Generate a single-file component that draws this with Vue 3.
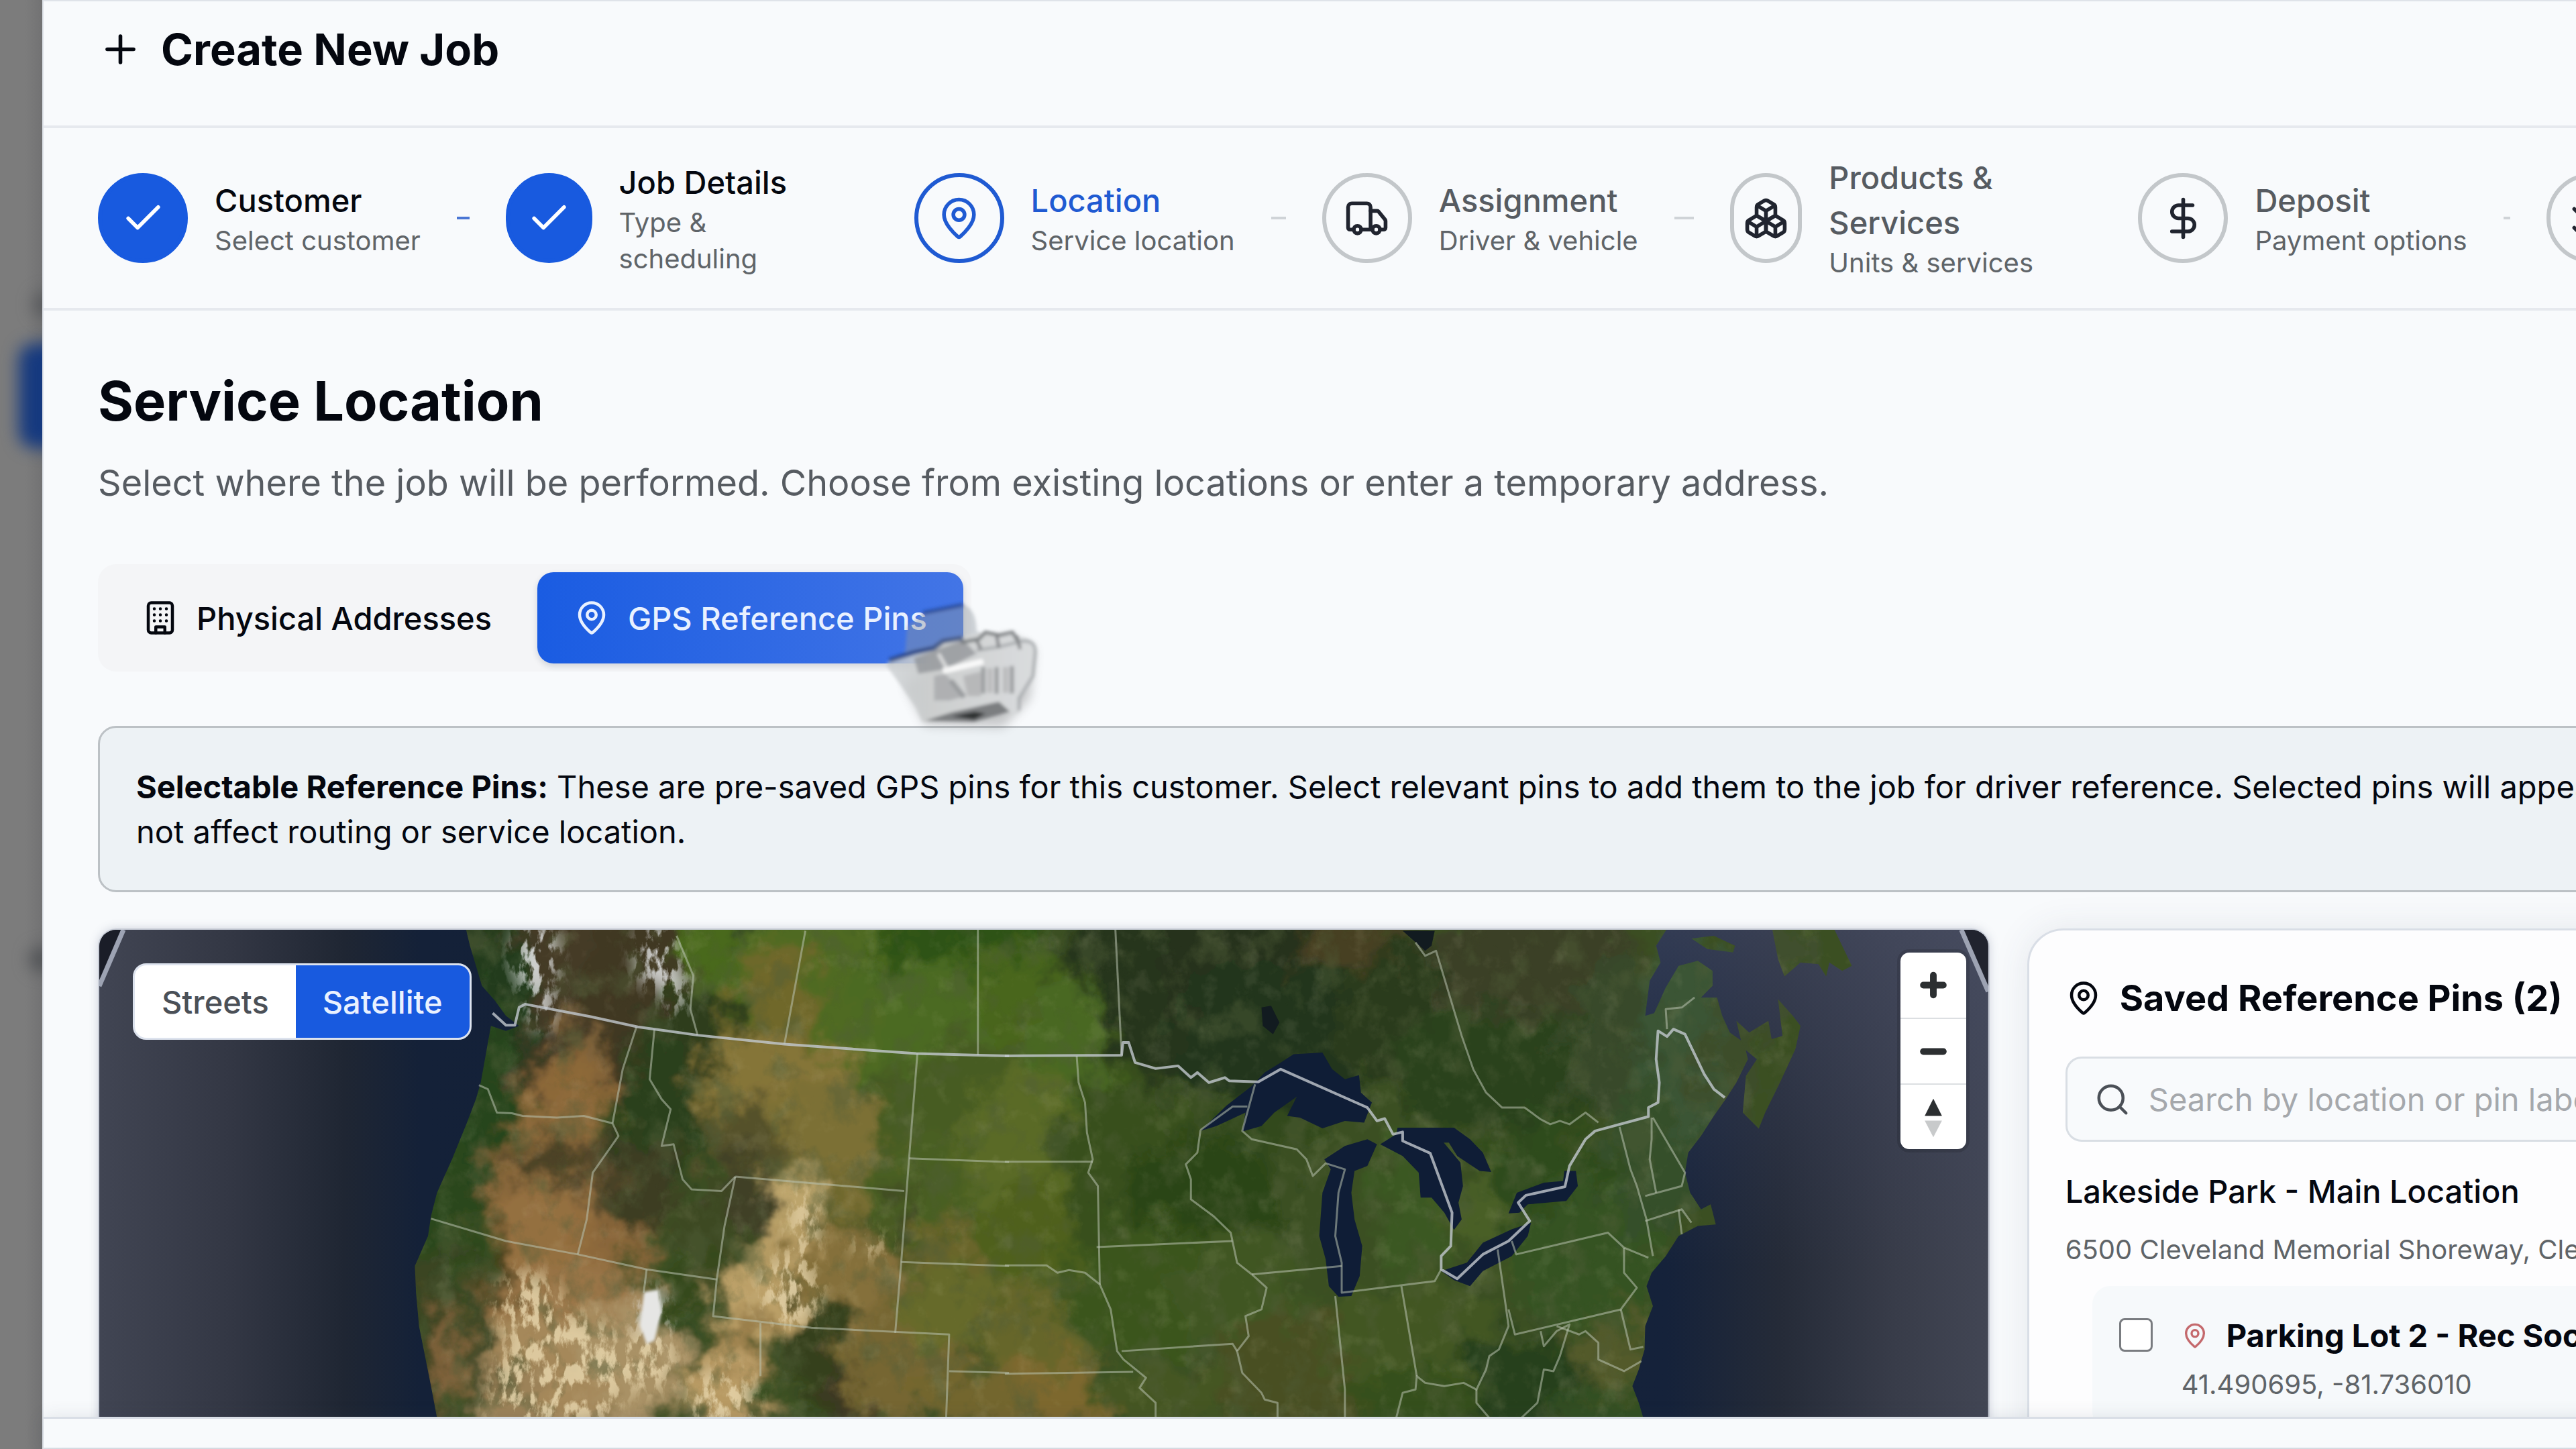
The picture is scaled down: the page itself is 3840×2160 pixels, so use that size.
<script setup>
import { ref } from 'vue'

const icons = {
  plus: '<path d="M5 12h14"/><path d="M12 5v14"/>',
  check: '<path d="M20 6 9 17l-5-5"/>',
  pin: '<path d="M20 10c0 4.993-5.539 10.193-7.399 11.799a1 1 0 0 1-1.202 0C9.539 20.193 4 14.993 4 10a8 8 0 0 1 16 0"/><circle cx="12" cy="10" r="3"/>',
  truck: '<path d="M14 18V6a2 2 0 0 0-2-2H4a2 2 0 0 0-2 2v11a1 1 0 0 0 1 1h2"/><path d="M15 18H9"/><path d="M19 18h2a1 1 0 0 0 1-1v-3.65a1 1 0 0 0-.22-.624l-3.48-4.35A1 1 0 0 0 17.52 8H14"/><circle cx="17" cy="18" r="2"/><circle cx="7" cy="18" r="2"/>',
  boxes: '<path d="M2.97 12.92A2 2 0 0 0 2 14.63v3.24a2 2 0 0 0 .97 1.71l3 1.8a2 2 0 0 0 2.06 0L12 19v-5.5l-5-3-4.03 2.42Z"/><path d="m7 16.5-4.74-2.85"/><path d="m7 16.5 5-3"/><path d="M7 16.5v5.17"/><path d="M12 13.5V19l3.97 2.38a2 2 0 0 0 2.06 0l3-1.8a2 2 0 0 0 .97-1.71v-3.24a2 2 0 0 0-.97-1.71L17 10.5l-5 3Z"/><path d="m17 16.5-5-3"/><path d="m17 16.5 4.74-2.85"/><path d="M17 16.5v5.17"/><path d="M7.97 4.42A2 2 0 0 0 7 6.13v4.37l5 3 5-3V6.13a2 2 0 0 0-.97-1.71l-3-1.8a2 2 0 0 0-2.06 0l-3 1.8Z"/><path d="M12 8 7.26 5.15"/><path d="m12 8 4.74-2.85"/><path d="M12 13.5V8"/>',
  dollar: '<path d="M12 2v20"/><path d="M17 5H9.5a3.5 3.5 0 0 0 0 7h5a3.5 3.5 0 0 1 0 7H6"/>',
  list: '<path d="M13 5h8"/><path d="M13 12h8"/><path d="M13 19h8"/><path d="m3 17 2 2 4-4"/><path d="m3 7 2 2 4-4"/>',
  building: '<rect width="16" height="20" x="4" y="2" rx="2"/><path d="M9 22v-4h6v4"/><path d="M8 6h.01M16 6h.01M12 6h.01M12 10h.01M12 14h.01M16 10h.01M16 14h.01M8 10h.01M8 14h.01"/>',
  search: '<path d="m21 21-4.34-4.34"/><circle cx="11" cy="11" r="8"/>'
}

const steps = [
  { title: 'Customer', note: 'Select customer', icon: 'check', state: 'done' },
  { title: 'Job Details', note: 'Type & scheduling', icon: 'check', state: 'done' },
  { title: 'Location', note: 'Service location', icon: 'pin', state: 'current' },
  { title: 'Assignment', note: 'Driver & vehicle', icon: 'truck', state: 'todo' },
  { title: 'Products & Services', note: 'Units & services', icon: 'boxes', state: 'todo' },
  { title: 'Deposit', note: 'Payment options', icon: 'dollar', state: 'todo' },
  { title: '', note: '', icon: 'list', state: 'todo' }
]

const search = ref('')
const picked = ref(false)

// Land tones: [cx, cy, rx, ry, colour]
const tones = [
  [700, 60, 300, 190, '#2f4122'], [690, 110, 120, 170, '#453a26'], [810, 60, 90, 170, '#3f3820'],
  [590, 120, 60, 130, '#243a1e'], [560, 260, 70, 160, '#28441f'], [500, 430, 50, 180, '#29471f'], [500, 620, 40, 160, '#3a4420'],
  [1120, 90, 220, 130, '#506b22'], [1010, 130, 60, 110, '#6f672c'], [1290, 60, 130, 140, '#2d5219'], [1380, 140, 130, 110, '#48661f'], [1230, 130, 90, 90, '#4c6a22'],
  [910, 60, 40, 130, '#48691f'],
  [880, 190, 80, 110, '#2f3d1e'], [830, 290, 60, 110, '#2a411b'],
  [710, 230, 56, 60, '#8c6739'], [725, 170, 22, 50, '#80633a'], [680, 290, 60, 60, '#8e6a3a'], [640, 390, 66, 80, '#8a673a'], [680, 470, 100, 90, '#94703f'], [770, 460, 60, 40, '#8c683a'],
  [670, 345, 60, 30, '#4b4326'], [800, 380, 60, 70, '#3e3c22'], [740, 360, 30, 60, '#54472a'],
  [1010, 240, 120, 80, '#857437'], [1080, 330, 120, 100, '#7b7035'], [960, 330, 60, 80, '#55512a'], [1040, 410, 80, 50, '#6a652c'],
  [1310, 270, 150, 110, '#475c22'], [1290, 400, 140, 110, '#4a5e22'], [1400, 330, 120, 120, '#5a6a28'], [1400, 470, 90, 100, '#50611f'],
  [960, 400, 60, 60, '#3f3f27'], [900, 460, 50, 60, '#3c4a20'], [1045, 410, 34, 70, '#bda56c'], [1040, 520, 76, 90, '#b49a62'], [970, 560, 60, 60, '#bca068'], [1110, 520, 80, 80, '#85703a'],
  [1205, 440, 20, 56, '#3f4a22'], [1260, 480, 60, 40, '#6a652c'],
  [700, 560, 130, 70, '#997547'], [680, 660, 140, 90, '#a5885a'], [800, 640, 70, 100, '#a99165'], [610, 690, 50, 60, '#9c8258'],
  [880, 560, 28, 90, '#35491f'], [905, 630, 22, 60, '#364d21'], [520, 640, 20, 90, '#80623a'], [565, 620, 20, 110, '#3d4726'], [600, 500, 18, 60, '#44401f'],
  [960, 620, 46, 40, '#9a7f4c'], [930, 690, 56, 60, '#b89a63'], [1080, 640, 50, 90, '#36401f'], [1120, 690, 40, 60, '#3c3820'], [1200, 650, 90, 80, '#766631'], [1260, 560, 70, 60, '#666a2c'],
  [1400, 610, 90, 80, '#66662a'], [1400, 700, 110, 60, '#7d672f'], [1300, 700, 80, 50, '#73662f'],
  [1560, 90, 130, 150, '#25351a'], [1720, 60, 150, 120, '#27331a'], [1880, 50, 90, 80, '#463f22'], [1760, 160, 160, 110, '#22341a'], [1980, 140, 140, 120, '#2b3a1f'], [2150, 80, 160, 140, '#3a3f28'], [2080, 210, 160, 90, '#2b421d'], [2260, 160, 70, 120, '#38482a'],
  [1520, 350, 90, 150, '#37501a'], [1440, 160, 60, 90, '#4a6822'], [1640, 400, 120, 90, '#2b4518'], [1740, 300, 80, 40, '#33491b'],
  [1560, 540, 130, 100, '#3b551d'], [1700, 540, 100, 90, '#405720'], [1780, 660, 120, 90, '#495023'], [1960, 400, 60, 110, '#3b5820'], [2080, 430, 70, 60, '#485f26'], [1960, 600, 130, 80, '#425720'],
  [2160, 380, 90, 100, '#2f4b1e'], [2220, 500, 110, 110, '#355221'], [2380, 200, 90, 160, '#375230'], [2320, 340, 70, 120, '#34502b'], [2130, 680, 110, 80, '#26401a'], [2260, 640, 60, 70, '#525a2c'], [1580, 700, 100, 50, '#455720'], [1970, 710, 100, 50, '#36501e'], [2250, 720, 80, 40, '#335022'],
  [2370, 160, 60, 160, '#3a5434'], [2490, 60, 60, 80, '#40502f'], [2440, 220, 50, 120, '#3c4d2b']
]

const snow = [
  [650, 40, 34, 60], [660, 110, 20, 40], [830, 40, 30, 50], [860, 90, 16, 40],
  [824, 580, 22, 46], [640, 560, 50, 50], [690, 660, 100, 90], [820, 640, 40, 50],
  [640, 700, 60, 60], [930, 700, 50, 50], [1050, 440, 22, 56], [1030, 540, 46, 56], [1150, 470, 30, 14]
]

const westLines = [
  'M645 478L660 490 675 560 700 562 718 570 775 575 820 570 868 592',
  'M908 303L885 430 868 592 878 630 835 740 825 880 810 985',
  'M565 878L690 945 810 985 925 1030 1042 1060', 'M925 1030L920 1100',
  'M1073 752L1055 900 1042 1060 1036 1170 1200 1205 1430 1225 1425 1475',
  'M1073 752L1355 795', 'M1377 383L1363 700 1350 1008 1340 1220',
  'M938 310L930 460 950 520 965 550 950 660 970 655 985 760 1000 790 1050 795 1073 752',
  'M1363 697L1530 708', 'M1350 1008L1530 1020', 'M1430 1335L1530 1340', 'M1115 1190V1350',
  'M1190 15L1155 355', 'M1478 0V388', 'M975 30L1003 150 998 250 1010 328'
]
const eastLines = [
  'M0 707H137', 'M0 1018H65L82 1040 100 1032 125 1040 148 1075 165 1150 175 1275 185 1300 220 1355 210 1385 235 1430V1475',
  'M0 1343L200 1337', 'M112 390L115 470 125 530 128 620 137 700 130 740 145 780 148 1075', 'M172 0L182 388',
  'M143 963L355 945', 'M182 1275L355 1253 362 1275',
  'M305 612L300 680 282 715 290 760 290 820 325 870 352 920 362 1010 385 1045 408 1085 400 1150 375 1170 380 1230 362 1275 370 1340 400 1400 405 1420 425 1430V1475',
  'M385 1045L525 1020', 'M305 612L355 542H378', 'M390 475L370 615 385 640 455 670 470 700 480 750 500 712 530 730 520 800 515 930 525 1010V1100L670 1065 680 1030',
  'M515 1110L530 1390V1475', 'M618 1080L642 1350', 'M610 1475L620 1400 640 1390 642 1350 655 1370 685 1380 715 1370 735 1390 750 1330 755 1290 770 1270 785 1200 780 1130 768 970',
  'M790 945L797 985 940 920 965 965 1003 995', 'M785 1150L795 1225 960 1150 985 1085 965 1040V965',
  'M640 50L655 90 672 75 712 330 730 430 750 500 775 545H810L835 580 850 595 865 585 880 595 905 560 925 590',
  'M958 603L975 730 985 780 1000 880 1010 990', 'M1008 575V640L1005 700 1015 800', 'M1010 575L1060 740 1055 780 998 810',
  'M998 885L1055 850 1070 890', 'M1050 850L1055 925', 'M960 1150L975 1270 995 1262',
  'M860 1200L895 1225 905 1215 925 1250V1300L965 1335 992 1305', 'M835 1215L840 1260 860 1215 880 1195 865 1290 855 1335 840 1330 830 1430 805 1475',
  'M735 1390V1430L755 1475', 'M1032 310L1030 250 1055 245 1075 215'
]
</script>

<template>
  <div class="page">
    <div class="backdrop" aria-hidden="true">
      <i class="smudge one"></i><i class="smudge active"></i><i class="smudge two"></i>
    </div>

    <section class="dialog" role="dialog" aria-labelledby="dialog-title">
      <header class="head">
        <svg class="icon lg" viewBox="0 0 24 24" v-html="icons.plus"></svg>
        <h1 id="dialog-title">Create New Job</h1>
      </header>

      <ol class="stepper">
        <li v-for="(s, i) in steps" :key="i" class="step" :class="s.state">
          <span class="dot"><svg class="icon lg" viewBox="0 0 24 24" v-html="icons[s.icon]"></svg></span>
          <span class="label">
            <span class="name">{{ s.title }}</span>
            <span class="note">{{ s.note }}</span>
          </span>
          <span class="link"></span>
        </li>
      </ol>

      <main class="body">
        <h2>Service Location</h2>
        <p class="lead">Select where the job will be performed. Choose from existing locations or enter a temporary address.</p>

        <div class="tabs" role="tablist">
          <button type="button" role="tab" class="tab">
            <svg class="icon md" viewBox="0 0 24 24" v-html="icons.building"></svg>Physical Addresses
          </button>
          <button type="button" role="tab" class="tab on" aria-selected="true">
            <svg class="icon md" viewBox="0 0 24 24" v-html="icons.pin"></svg>GPS Reference Pins
          </button>
          <svg class="cursor" viewBox="0 0 900 840" aria-hidden="true">
            <defs>
              <filter id="soft" x="-20%" y="-20%" width="140%" height="140%"><feGaussianBlur stdDeviation="8" /></filter>
              <filter id="softer" x="-30%" y="-30%" width="160%" height="160%"><feGaussianBlur stdDeviation="24" /></filter>
              <linearGradient id="palm" x1="0" y1="0" x2="1" y2="0">
                <stop offset="0" stop-color="#c6cacd" stop-opacity=".7" /><stop offset=".3" stop-color="#cccece" /><stop offset="1" stop-color="#dadcde" />
              </linearGradient>
            </defs>
            <path d="M180 540L270 720 620 730 740 600 760 380 640 320Z" fill="#555" opacity=".3" filter="url(#softer)" />
            <g filter="url(#soft)">
              <path d="M190 280L270 215 440 180Q500 200 500 300L560 320 300 390 180 400Z" fill="#8e959f" opacity=".42" />
              <path d="M260 218L440 182" stroke="#1c3f8c" stroke-width="20" opacity=".65" />
              <path d="M95 450L120 425 300 385 340 345 560 300 690 325Q770 330 768 400L755 500Q740 560 690 600V665L480 680 260 705 230 640Z" fill="url(#palm)" />
              <path d="M220 420L440 340 500 400 360 470 240 490Z" fill="#85888e" opacity=".65" />
              <path d="M110 430L220 395 310 375 350 345 440 330" stroke="#1a3368" stroke-width="22" fill="none" opacity=".65" />
              <path d="M430 350L510 335 540 305 600 318 660 305 690 350" stroke="#707376" stroke-width="16" fill="none" opacity=".85" />
              <path d="M500 385L600 370 700 345Q768 335 762 400L752 500 690 600V655" stroke="#999c9f" stroke-width="14" fill="none" opacity=".7" />
              <path d="M500 340L520 380M590 320L600 375M680 320L695 380" stroke="#828487" stroke-width="14" />
              <path d="M310 500L360 490 450 590 380 610 310 610Z" fill="#afb0b2" />
              <path d="M440 500L520 480V590H460Z" fill="#b7b8b9" />
              <path d="M530 460V578M590 460V580M658 455V578" stroke="#9a9c9e" stroke-width="18" />
              <path d="M560 465V575M630 460V575" stroke="#bbbcbd" stroke-width="24" />
              <path d="M350 478L530 435" stroke="#fff" stroke-width="26" opacity=".9" />
              <path d="M330 400L375 480" stroke="#f4f4f4" stroke-width="16" opacity=".7" />
              <path d="M385 520L445 595" stroke="#9a9c9f" stroke-width="22" />
              <path d="M270 700L390 662 600 615 650 660 490 705Z" fill="#7c7e80" />
              <path d="M390 680L490 660 540 668 490 695Z" fill="#2e3032" />
            </g>
          </svg>
        </div>

        <p class="notice"><strong>Selectable Reference Pins:</strong> These are pre-saved GPS pins for this customer. Select relevant pins to add them to the job for driver reference. Selected pins will appear<br />not affect routing or service location.</p>

        <div class="columns">
          <div class="map">
            <svg class="terrain" viewBox="0 0 2816 1000" role="img" aria-label="Satellite map">
              <defs>
                <linearGradient id="sea" x1="0" x2="1" y1="0" y2="0">
                  <stop offset="0" stop-color="#414553" /><stop offset=".07" stop-color="#333744" /><stop offset=".13" stop-color="#1f2633" /><stop offset=".17" stop-color="#142138" />
                  <stop offset=".5" stop-color="#12203a" /><stop offset=".83" stop-color="#15223a" /><stop offset=".89" stop-color="#252b38" /><stop offset=".95" stop-color="#383c49" /><stop offset="1" stop-color="#424654" />
                </linearGradient>
                <linearGradient id="haze" x1="0" x2="0" y1="0" y2="1">
                  <stop offset="0" stop-color="#4a5068" stop-opacity=".55" /><stop offset=".5" stop-color="#3a4260" stop-opacity="0" />
                </linearGradient>
                <clipPath id="land">
                  <path transform="matrix(.893 0 0 .4974 -10 -6)" d="M622 0L630 60 640 120 650 180 672 225 690 270 712 300 690 315 665 300 660 350 655 400 648 470 640 520 625 590 600 700 575 800 565 870 560 930 538 1020 540 1100 545 1200 555 1290 565 1380 575 1475 640 2030H1530V0Z" />
                  <path transform="matrix(.9566 0 0 .4974 1350 -6)" d="M-10 0H1035L1015 60 1022 110 1005 165 998 270 1012 262 1030 185 1050 120 1080 105 1103 135V180L1085 215 1110 215 1118 270 1130 320 1152 350 1158 400 1140 470 1125 515 1105 570 1085 630 1065 680 1060 740 1068 800 1085 850 1100 835 1108 895 1080 900 1050 930 1030 990 1008 1040 1000 1080 1010 1140 998 1200 997 1270 988 1330 978 1380 988 1430 995 1475 900 2030H-10Z" />
                  <path transform="matrix(.9566 0 0 .4974 1350 -6)" d="M1205 220L1228 270 1240 300 1232 370 1208 470 1185 560 1175 608 1150 560 1155 450 1172 400 1150 365 1140 285 1160 320 1190 285 1195 340 1212 330ZM1195 0H1290L1320 120 1305 135 1285 110 1280 152 1268 115 1240 110 1215 152 1205 100ZM1070 38L1105 30 1138 60 1135 80 1095 70Z" />
                </clipPath>
                <filter id="smear" x="0" y="0" width="100%" height="100%">
                  <feGaussianBlur stdDeviation="13" result="b" />
                  <feTurbulence type="fractalNoise" baseFrequency=".02" numOctaves="6" seed="8" />
                  <feDisplacementMap in="b" scale="110" xChannelSelector="R" yChannelSelector="G" result="d" />
                  <feGaussianBlur in="d" stdDeviation="1" />
                </filter>
                <filter id="grain" x="0" y="0" width="100%" height="100%">
                  <feTurbulence type="fractalNoise" baseFrequency=".022 .018" numOctaves="7" seed="21" />
                  <feColorMatrix values="0 0 0 0 .08  0 0 0 0 .11  0 0 0 0 .04  4 0 0 0 -2" />
                </filter>
                <filter id="glow" x="0" y="0" width="100%" height="100%">
                  <feTurbulence type="fractalNoise" baseFrequency=".03" numOctaves="5" seed="33" />
                  <feColorMatrix values="0 0 0 0 .8  0 0 0 0 .75  0 0 0 0 .5  4 0 0 0 -2.2" />
                </filter>
                <filter id="flecks" x="0" y="0" width="100%" height="100%">
                  <feGaussianBlur in="SourceGraphic" stdDeviation="15" result="s" />
                  <feTurbulence type="fractalNoise" baseFrequency=".07 .034" numOctaves="5" seed="5" />
                  <feColorMatrix values="0 0 0 0 1  0 0 0 0 1  0 0 0 0 1  6 0 0 0 -2.8" result="n" />
                  <feComposite in="s" in2="n" operator="in" />
                </filter>
                <filter id="edge"><feGaussianBlur stdDeviation="2" /></filter>
              </defs>
              <rect width="2816" height="1000" fill="url(#sea)" />
              <rect x="2200" width="616" height="1000" fill="url(#haze)" />
              <g clip-path="url(#land)">
                <g filter="url(#smear)">
                  <rect x="-100" y="-100" width="3016" height="1200" fill="#3b4f20" />
                  <ellipse v-for="(t, i) in tones" :key="i" :cx="t[0]" :cy="t[1]" :rx="t[2]" :ry="t[3]" :fill="t[4]" />
                </g>
                <rect width="2816" height="1000" filter="url(#grain)" opacity=".45" />
                <rect width="2816" height="1000" filter="url(#glow)" opacity=".08" />
                <g filter="url(#flecks)" opacity=".85">
                  <rect width="2816" height="1000" fill="none" />
                  <ellipse v-for="(t, i) in snow" :key="i" :cx="t[0]" :cy="t[1]" :rx="t[2]" :ry="t[3]" :fill="i < 5 ? '#e8eaec' : '#e6d4aa'" />
                </g>
                <path d="M812 540L834 536 838 570 828 612 816 618 806 590Z" fill="#e6e6e4" filter="url(#edge)" />
              </g>
              <g transform="matrix(.9566 0 0 .4974 1350 -6)" fill="#0f1d36">
                <path d="M305 615L345 540 385 480 405 440 430 410 450 385 495 380 510 430 530 460 552 448 555 500 572 530 560 590 530 585 495 607 460 575 440 570 455 512 420 560 400 600 370 617 375 560 330 600Z" />
                <path d="M520 1112L505 1080 500 1000 490 930 495 800 508 730 498 700 530 660 565 640 580 655 565 720 545 735 540 800 545 880 557 960 553 1050 540 1110Z" />
                <path d="M585 655L610 625 612 605 700 605 725 640 745 680 758 738 740 735 705 690 692 650 684 650 710 710 714 780 707 830 712 880 700 912 685 860 665 815 648 815 645 740 620 690Z" />
                <path d="M680 1035L700 1062 725 1080 745 1035 790 990 815 930 820 890 790 910 745 950 720 1010Z" />
                <path d="M785 862L798 800 840 770 870 765 872 735 890 735 893 780 875 825 815 835 802 860Z" />
                <path d="M400 245L415 240 428 290 418 325 402 300ZM620 15L670 15 665 60 655 75Z" fill="#121b20" />
              </g>
              <g class="borders">
                <g transform="matrix(.893 0 0 .4974 -10 -6)">
                  <path v-for="d in westLines" :key="d" :d="d" />
                  <path class="nation" d="M668 262L690 298 705 298 712 245 722 235 830 272 910 303 1010 328 1155 355 1375 383 1480 388 1530 390" />
                </g>
                <g transform="matrix(.9566 0 0 .4974 1350 -6)">
                  <path v-for="d in eastLines" :key="d" :d="d" />
                  <path class="nation" d="M0 390L182 388 184 350 193 350 203 410 235 428 270 420 290 455 300 440 318 470 343 455 350 465 395 468 430 430 565 545 580 585 592 578 605 625 620 618V645L663 682 697 860 695 960 680 990V1030L705 1058 745 985 785 945 818 885 800 830 812 808 873 782 880 720 905 640 920 615 1003 572V545L1018 530 1020 470 1015 400 1018 315 1032 332 1042 310 1060 325 1090 445 1105 490 1122 515" />
                </g>
              </g>
              <path d="M0 0H36L0 84Z" fill="#1a1d28" /><path d="M36 0L0 84" stroke="#9da3b3" stroke-width="7" />
              <path d="M2816 0H2776L2816 92Z" fill="#20232e" /><path d="M2776 0L2816 92" stroke="#9da3b3" stroke-width="7" />
            </svg>

            <div class="styles">
              <button type="button">Streets</button>
              <button type="button" class="on">Satellite</button>
            </div>

            <div class="zoom">
              <button type="button" aria-label="Zoom in"><svg viewBox="0 0 98 98"><path d="M34 49H64M49 34V64" /></svg></button>
              <button type="button" aria-label="Zoom out"><svg viewBox="0 0 98 98"><path d="M34 49H64" /></svg></button>
              <button type="button" aria-label="Reset bearing"><svg viewBox="0 0 98 98"><path class="n" d="M36 47L49 21 62 47Z" /><path class="s" d="M36 54L49 79 62 54Z" /></svg></button>
            </div>
          </div>

          <aside class="saved">
            <h3><svg class="icon md" viewBox="0 0 24 24" v-html="icons.pin"></svg>Saved Reference Pins (2)</h3>
            <label class="search">
              <svg class="icon md" viewBox="0 0 24 24" v-html="icons.search"></svg>
              <input v-model="search" type="text" aria-label="Search pins" placeholder="Search by location or pin label" />
            </label>
            <p class="place">Lakeside Park - Main Location</p>
            <p class="address">6500 Cleveland Memorial Shoreway, Cleveland</p>
            <label class="entry">
              <input v-model="picked" type="checkbox" />
              <span class="details">
                <span class="pin"><svg class="icon sm" viewBox="0 0 24 24" v-html="icons.pin"></svg>Parking Lot 2 - Rec Soccer</span>
                <span class="coords">41.490695, -81.736010</span>
              </span>
            </label>
          </aside>
        </div>
      </main>

      <footer class="foot"></footer>
    </section>
  </div>
</template>

<style>
body { margin: 0; overflow: hidden; }
</style>

<style scoped>
.page {
  display: flex;
  height: 100vh;
  overflow: hidden;
  background: #7b7b7b;
  color: #04070f;
  font-family: Inter, "Liberation Sans", sans-serif;
  font-size: 47px;
  line-height: 67px;
}
h1, h2, h3, p, ol { margin: 0; padding: 0; }
button, input { font: inherit; color: inherit; }
button { border: 0; background: none; cursor: pointer; }

.backdrop { position: relative; flex: 0 0 63px; overflow: hidden; background: linear-gradient(90deg, #7c7c7c 60%, #727273); }
.smudge { position: absolute; border-radius: 24px; filter: blur(12px); }
.smudge.one { left: 50px; top: 436px; width: 40px; height: 36px; background: #55575a; }
.smudge.active { left: 28px; top: 512px; width: 80px; height: 156px; background: #15397f; }
.smudge.two { left: 44px; top: 1412px; width: 40px; height: 36px; background: #4f5154; }

.dialog {
  flex: 0 0 calc(115vw + 8px);
  display: flex;
  flex-direction: column;
  box-sizing: border-box;
  border: 2px solid #dfe3e9;
  background: #f8fafc;
}
.icon { flex: none; fill: none; stroke: currentColor; stroke-width: 2; stroke-linecap: round; stroke-linejoin: round; }
.icon.lg { width: 67px; height: 67px; }
.icon.md { width: 54px; height: 54px; }
.icon.sm { width: 40px; height: 40px; }

.head { display: flex; align-items: center; gap: 27px; padding: 38px 81px 80px; border-bottom: 4px solid #e6e9ee; }
h1 { font-size: 65px; font-weight: 700; line-height: 67px; }

.stepper {
  display: grid;
  grid-template-columns: repeat(7, minmax(0, 1fr));
  align-items: center;
  min-height: 188px;
  padding: 40px 81px;
  border-bottom: 4px solid #e6e9ee;
  list-style: none;
}
.step { display: flex; align-items: center; }
.dot {
  display: flex;
  align-items: center;
  justify-content: center;
  box-sizing: border-box;
  width: 134px;
  height: 134px;
  border: 6px solid #c3c7ca;
  border-radius: 67px;
  color: #20242f;
}
.label { display: flex; flex-direction: column; margin-left: 40px; color: #565b61; }
.name { font-weight: 500; }
.note { font-size: 40px; line-height: 54px; color: #5f6468; }
.link { flex: 1; height: 4px; margin: 0 54px; background: #cfd3d7; }
.done .dot { border-color: #185adf; background: #185adf; color: #fff; }
.done .name { color: #04070f; }
.done .link { background: #4a76d4; }
.current .dot { border-color: #1f5ad2; color: #1f5ad2; }
.current .name { color: #1f5ad2; }

.body { flex: 1; min-height: 0; overflow: hidden; padding: 81px 81px 0; }
h2 { font-size: 81px; font-weight: 700; line-height: 108px; }
.lead { margin-top: 27px; font-size: 54px; line-height: 81px; color: #565b61; }

.tabs { position: relative; display: flex; gap: 14px; width: max-content; margin-top: 81px; padding: 12px; border-radius: 27px; background: #f4f5f7; }
.tab { display: flex; align-items: center; gap: 27px; height: 136px; padding: 0 54px; border-radius: 24px; font-weight: 500; }
.tab.on { background: linear-gradient(90deg, #1a5ce2, #4375e6); color: #e9f1ff; box-shadow: 0 4px 10px rgba(20, 30, 60, .16); }
.cursor { position: absolute; left: 1143px; top: 0; width: 300px; height: 280px; overflow: visible; pointer-events: none; }

.notice { margin-top: 81px; padding: 54px; border: 3px solid #bcc1c5; border-radius: 27px; background: #edf2f5; white-space: nowrap; }
.notice strong { font-weight: 700; }

.columns { display: grid; grid-template-columns: 2.04fr 1fr; gap: 56px; align-items: start; margin-top: 54px; }
.map { position: relative; overflow: hidden; border: 2px solid #c9ced8; border-radius: 27px; box-shadow: 0 0 14px rgba(90, 100, 130, .25); }
.terrain { display: block; width: 100%; height: auto; }
.borders path { fill: none; stroke: #b9c2b0; stroke-opacity: .55; stroke-width: 3; stroke-linejoin: round; vector-effect: non-scaling-stroke; }
.borders .nation { stroke: #c3c9cf; stroke-opacity: .8; stroke-width: 4; }

.styles { position: absolute; top: 50px; left: 50px; display: flex; overflow: hidden; border: 3px solid #dde3ee; border-radius: 20px; background: #fff; }
.styles button { height: 108px; padding: 0 40px; color: #4b5057; font-weight: 500; }
.styles .on { background: #185adf; color: #e9f1ff; }

.zoom { position: absolute; top: 34px; right: 33px; overflow: hidden; border-radius: 13px; background: #fff; box-shadow: 0 0 0 5px rgba(0, 0, 0, .12); }
.zoom button { display: block; width: 98px; height: 97px; padding: 0; }
.zoom button + button { height: 98px; border-top: 2px solid #dcdfe2; }
.zoom svg { display: block; width: 98px; height: 97px; stroke: #2c2f31; stroke-width: 10; stroke-linecap: round; }
.zoom .n { fill: #2c2f31; stroke: none; }
.zoom .s { fill: #c8cacb; stroke: none; }

.saved { padding: 54px; border: 3px solid #d9dee6; border-radius: 54px; background: #fdfdfe; box-shadow: 0 0 54px rgba(60, 70, 90, .1); white-space: nowrap; }
h3 { display: flex; align-items: center; gap: 27px; font-size: 54px; font-weight: 700; line-height: 94px; }
.search { display: flex; align-items: center; gap: 27px; height: 121px; margin-top: 40px; padding: 0 40px; border: 3px solid #d9dee4; border-radius: 24px; background: #f8fafc; color: #4b5057; }
.search input { flex: 1; min-width: 0; padding: 0; border: 0; outline: 0; background: none; }
.search input::placeholder { color: #a5a8ac; opacity: 1; }
.place { margin-top: 40px; font-weight: 500; }
.address { margin-top: 27px; font-size: 40px; line-height: 54px; color: #5f6468; }
.entry { display: flex; align-items: flex-start; gap: 43px; margin: 27px 0 0 40px; padding: 40px; border-radius: 27px; background: #f6f9fb; }
.entry input { flex: none; appearance: none; box-sizing: border-box; width: 50px; height: 50px; margin: 8px 0 0; border: 3px solid #797c80; border-radius: 8px; background: #fff; }
.details { display: flex; flex-direction: column; gap: 13px; }
.pin { display: flex; align-items: center; gap: 27px; font-weight: 700; }
.pin .icon { color: #c4696c; }
.coords { font-size: 40px; line-height: 54px; color: #5f6468; }

.foot { position: relative; height: 43px; border-top: 3px solid #d9dee6; background: #f8fafc; box-shadow: 0 0 27px rgba(60, 70, 90, .12); }
</style>
